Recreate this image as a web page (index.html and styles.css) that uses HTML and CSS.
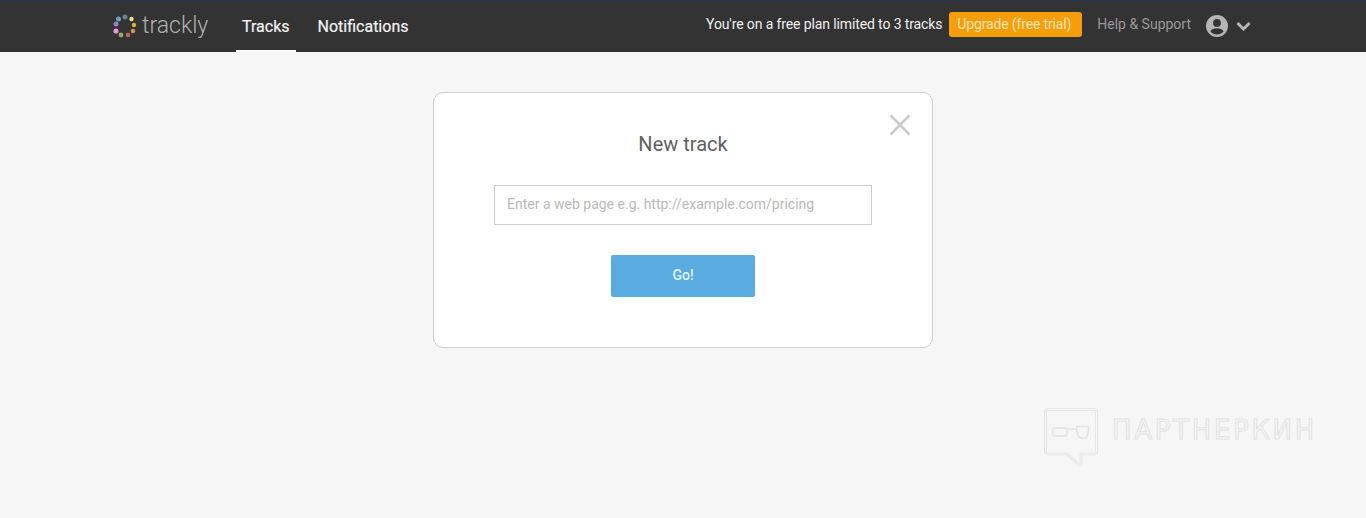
FILE: index.html
```html
<!DOCTYPE html>
<html lang="en">
<head>
    <meta charset="UTF-8">
    <meta name="viewport" content="width=device-width, initial-scale=1.0">
    <title>Trackly - New track</title>
    <link rel="stylesheet" href="styles.css">
</head>
<body>
    <header class="topbar">
        <a class="logo" href="#">
            <svg class="logo-mark" width="24" height="24" viewBox="0 0 24 24">
                <circle cx="12" cy="3" r="2.500" fill="#6b7f95"/>
                <circle cx="5.500" cy="5" r="2.500" fill="#6fa0bb"/>
                <circle cx="18.500" cy="5" r="2.200" fill="#e8e3a0"/>
                <circle cx="21" cy="11" r="2.200" fill="#e0ac3d"/>
                <circle cx="20" cy="17" r="2.300" fill="#d4924a"/>
                <circle cx="15" cy="21" r="2.300" fill="#c7605a"/>
                <circle cx="8" cy="21" r="2.400" fill="#9aa66a"/>
                <circle cx="3" cy="17" r="2.600" fill="#e09adc"/>
                <circle cx="3" cy="10" r="2.500" fill="#9a80c0"/>
            </svg>
            <span class="logo-text">trackly</span>
        </a>
        <nav class="main-nav">
            <a class="nav-link active" href="#">Tracks</a>
            <a class="nav-link" href="#">Notifications</a>
        </nav>
        <div class="topbar-right">
            <span class="plan-note">You're on a free plan limited to 3 tracks</span>
            <a class="upgrade-btn" href="#">Upgrade (free trial)</a>
            <a class="help-link" href="#">Help &amp; Support</a>
            <svg class="user-icon" width="22" height="22" viewBox="0 0 22 22">
                <path fill="#b5b5b5" fill-rule="evenodd" d="M11 0a11 11 0 1 0 0 22a11 11 0 0 0 0-22zM11 4a3.900 3.900 0 1 1 0 7.800a3.900 3.900 0 0 1 0-7.800zM11 19.400a8.500 8.500 0 0 1-6.600-3.200c.9-1.800 3.800-2.900 6.600-2.900s5.700 1.100 6.600 2.900a8.500 8.500 0 0 1-6.600 3.200z"/>
            </svg>
            <svg class="caret-icon" width="15" height="10" viewBox="0 0 15 10">
                <path d="M1.500 2l6 6 6-6" fill="none" stroke="#b5b5b5" stroke-width="3"/>
            </svg>
        </div>
    </header>

    <main class="content">
        <div class="modal">
            <a class="modal-close" href="#">
                <svg width="22" height="22" viewBox="0 0 22 22">
                    <path d="M1.500 1.500l19 19M20.500 1.500l-19 19" fill="none" stroke="#cccccc" stroke-width="2.600"/>
                </svg>
            </a>
            <h2>New track</h2>
            <input class="url-input" type="text" placeholder="Enter a web page e.g. http://example.com/pricing">
            <button class="go-btn">Go!</button>
        </div>
    </main>

    <div class="watermark">
        <svg width="54" height="60" viewBox="0 0 54 60">
            <path d="M4 1.500h46a2.500 2.500 0 0 1 2.500 2.500v39.500a2.500 2.500 0 0 1-2.500 2.500H37v11h-2L23 46H4a2.500 2.500 0 0 1-2.500-2.500V4A2.500 2.500 0 0 1 4 1.500z" fill="none" stroke="#e3e3e3" stroke-width="2.600"/>
            <path d="M4 1.500h46a2.500 2.500 0 0 1 2.500 2.500v39.500a2.500 2.500 0 0 1-2.500 2.500H37v11h-2L23 46H4a2.500 2.500 0 0 1-2.500-2.500V4A2.500 2.500 0 0 1 4 1.500z" fill="none" stroke="#f6f6f6" stroke-width="1"/>
            <path d="M11 20h9.500q2.500 0 2.500 2.500v3q0 2.500-2.500 2.500H11q-2.500 0-2.500-2.500v-3q0-2.500 2.500-2.500zM23 21h10M33 18.500h11.500v4l-1 5q-.5 2.500-3 2.500h-3q-2.500 0-3.500-2.500l-1.500-5z" fill="none" stroke="#e3e3e3" stroke-width="1.500"/>
        </svg>
        <span class="watermark-text">ПАРТНЕРКИН</span>
    </div>
</body>
</html>
```

FILE: styles.css
```css
body {
    font-family: 'Roboto', 'Liberation Sans', sans-serif;
    background-color: #f6f6f6;
    margin: 0;
    padding: 0;
    color: #333;
    height: 518px;
    overflow: hidden;
}

a {
    text-decoration: none;
}

.topbar {
    display: flex;
    align-items: center;
    height: 52px;
    box-sizing: border-box;
    padding: 0 115px 0 113px;
    background-color: #333333;
    border-top: 2px solid #2c3342;
}

.logo {
    display: flex;
    align-items: center;
    gap: 5px;
    width: 123px;
    margin-top: -3px;
}

.logo-text {
    font-size: 23px;
    color: #b0b0b0;
    font-weight: 300;
}

.main-nav {
    display: flex;
    align-self: stretch;
    gap: 16px;
}

.nav-link {
    display: flex;
    align-items: center;
    padding: 0 6px;
    font-size: 16px;
    color: #f4f4f4;
    border-bottom: 2px solid transparent;
    -webkit-text-stroke: 0.2px #f4f4f4;
}

.nav-link.active {
    border-bottom-color: #ffffff;
}

.topbar-right {
    display: flex;
    align-items: center;
    margin-left: auto;
    margin-top: -2px;
}

.plan-note {
    font-size: 14px;
    letter-spacing: -0.12px;
    color: #f0f0f0;
    margin-right: 7px;
    margin-top: -5px;
}

.upgrade-btn {
    padding: 0 11px 0 8px;
    line-height: 25px;
    font-size: 14px;
    letter-spacing: -0.15px;
    color: #fbe3b4;
    background-color: #f59e0b;
    border-radius: 3px;
    margin-top: -4px;
}

.help-link {
    font-size: 14px;
    color: #999;
    margin: -4px 15px 0;
}

.caret-icon {
    margin-left: 8px;
}

.content {
    display: flex;
    justify-content: center;
    padding-top: 40px;
}

.modal {
    position: relative;
    display: flex;
    flex-direction: column;
    align-items: center;
    width: 500px;
    height: 256px;
    box-sizing: border-box;
    background: #fff;
    border: 1px solid #cfcfcf;
    border-radius: 10px;
}

.modal h2 {
    margin: 39px 0 0;
    font-size: 20px;
    line-height: 24px;
    font-weight: 400;
    color: #5f5f5f;
}

.modal-close {
    position: absolute;
    top: 21px;
    right: 21px;
    line-height: 0;
}

.url-input {
    width: 378px;
    height: 40px;
    box-sizing: border-box;
    margin-top: 29px;
    padding: 0 12px 2px;
    border: 1px solid #cccccc;
    font-family: inherit;
    font-size: 14px;
    outline: none;
}

.url-input::placeholder {
    color: #b9b9b9;
}

.go-btn {
    width: 144px;
    height: 42px;
    margin-top: 30px;
    padding: 0 0 2px;
    background-color: #5aabe0;
    color: #dff5fb;
    border: none;
    border-radius: 2px;
    font-family: inherit;
    font-size: 14px;
    font-weight: 500;
    cursor: pointer;
}

.watermark {
    position: absolute;
    left: 1044px;
    top: 408px;
    display: flex;
    align-items: flex-start;
    gap: 14px;
}

.watermark-text {
    margin-top: 6px;
    font-family: 'DejaVu Sans', sans-serif;
    font-size: 26px;
    line-height: 32px;
    letter-spacing: 2.7px;
    color: transparent;
    -webkit-text-stroke: 1px #e3e3e3;
}
```
